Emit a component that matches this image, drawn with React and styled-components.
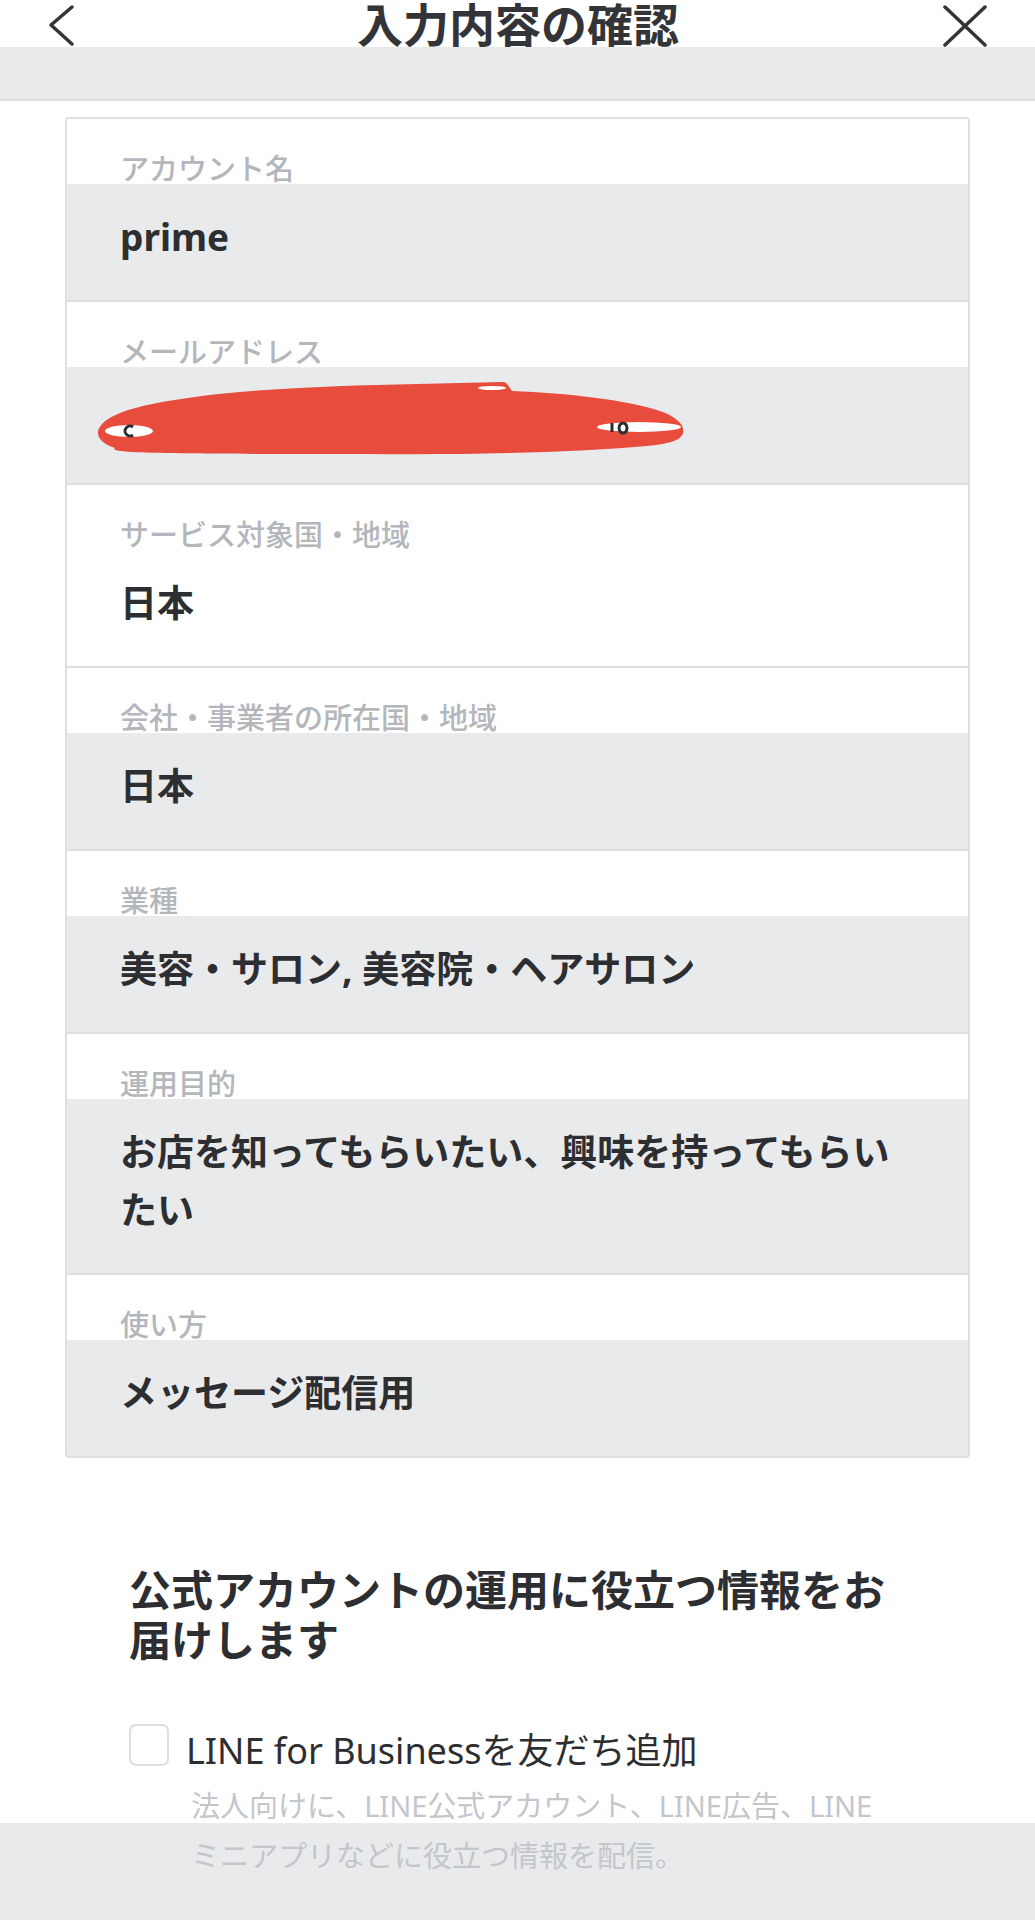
import styled, { createGlobalStyle } from "styled-components";

const GlobalStyle = createGlobalStyle`
  body {
    margin: 0;
    background: #ffffff;
    font-family: "Noto Sans", "Noto Sans CJK JP", sans-serif;
    color: #2d2e31;
  }
`;

const Page = styled.div`
  display: flex;
  flex-direction: column;
  min-height: 1920px;
  width: 1035px;
`;

const Header = styled.header`
  display: grid;
  grid-template-columns: 1fr auto 1fr;
  align-items: center;
  height: 47px;
  padding: 0 47px 0 48px;

  & h1 {
    margin: 0;
    font-size: 46px;
    line-height: 46px;
    font-weight: 700;
    color: #333438;
  }
  .back {
    justify-self: start;
  }
  .close {
    justify-self: end;
  }
`;

const SubBar = styled.div`
  height: 52px;
  background: #e9eaec;
  border-bottom: 2px solid #dcdddf;
`;

const Card = styled.section`
  margin: 16px 65px 0;
  border: 2px solid #dedfe1;
  border-radius: 4px;
  overflow: hidden;
`;

const Row = styled.div`
  & + & {
    border-top: 2px solid #dedfe1;
  }
`;

const Label = styled.div`
  padding: 35px 53px 1px;
  font-size: 29px;
  line-height: 29px;
  font-weight: 500;
  color: #b3b6bb;
`;

const Value = styled.div`
  padding: 24px 53px 34px;
  min-height: 58px;
  font-size: 37px;
  line-height: 58px;
  font-weight: 700;
  color: #2d2e31;
  background: ${(p) => (p.$shaded ? "#e9eaec" : "transparent")};

  & svg {
    display: block;
    margin: -24px -53px -34px;
  }
`;

const Bottom = styled.section`
  flex: 1;
  padding: 107px 129px 0;
  background: linear-gradient(
    to bottom,
    #ffffff 0,
    #ffffff 365px,
    #e9eaec 365px
  );

  & h2 {
    margin: 0;
    font-size: 42px;
    line-height: 50px;
    font-weight: 700;
    color: #2d2e31;
  }
`;

const CheckRow = styled.label`
  display: flex;
  gap: 17px;
  margin-top: 58px;
  font-size: 36px;
  line-height: 56px;
  color: #2d2e31;
`;

const Box = styled.span`
  flex: none;
  width: 36px;
  height: 38px;
  margin-top: 1px;
  border: 2px solid #dcdde0;
  border-radius: 7px;
  background: #ffffff;
`;

const Note = styled.p`
  margin: 2px 24px 0 62px;
  font-size: 29px;
  line-height: 50px;
  color: #c3c6cb;
`;

const BackIcon = () => (
  <svg className="back" width="30" height="47" viewBox="0 0 30 47">
    <polyline
      points="24,7 3,25 24,44"
      fill="none"
      stroke="#333438"
      strokeWidth="3.5"
      strokeLinecap="round"
      strokeLinejoin="round"
    />
  </svg>
);

const CloseIcon = () => (
  <svg className="close" width="46" height="47" viewBox="0 0 46 47">
    <path
      d="M3 7 L43 45 M43 7 L3 45"
      fill="none"
      stroke="#333438"
      strokeWidth="3.5"
      strokeLinecap="round"
    />
  </svg>
);

const Scribble = () => (
  <svg width="900" height="116" viewBox="0 0 900 116">
    <path
      d="M31 64 C35 50 60 42 90 36 C160 22 263 19 350 17 L435 15 C440 14 442 20 445 24 C500 26 560 33 593 44 C610 50 618 58 616 66 C614 74 600 77 580 79 C500 86 395 88 300 87 C200 87 100 87 65 85 C50 84 45 83 48 81 C35 77 30 70 31 64 Z"
      fill="#e84c3d"
    />
    <ellipse cx="62" cy="64" rx="24" ry="6" fill="#ffffff" />
    <path d="M66 60 a5 5 0 1 0 0 8" fill="none" stroke="#2d2e31" strokeWidth="3" />
    <ellipse cx="572" cy="60" rx="42" ry="5" fill="#ffffff" />
    <path d="M545 56 v9 M556 56 a4 5 0 1 0 0.1 0" fill="none" stroke="#2d2e31" strokeWidth="3" />
    <ellipse cx="425" cy="21" rx="14" ry="2" fill="#ffffff" />
  </svg>
);

const fields = [
  { label: "アカウント名", value: "prime", shaded: true },
  { label: "メールアドレス", redacted: true, shaded: true },
  { label: "サービス対象国・地域", value: "日本", shaded: false },
  { label: "会社・事業者の所在国・地域", value: "日本", shaded: true },
  { label: "業種", value: "美容・サロン, 美容院・ヘアサロン", shaded: true },
  {
    label: "運用目的",
    value: "お店を知ってもらいたい、興味を持ってもらいたい",
    shaded: true,
  },
  { label: "使い方", value: "メッセージ配信用", shaded: true },
];

export default function App() {
  return (
    <>
      <GlobalStyle />
      <Page>
        <Header>
          <BackIcon />
          <h1>入力内容の確認</h1>
          <CloseIcon />
        </Header>
        <SubBar />
        <Card>
          {fields.map((f) => (
            <Row key={f.label}>
              <Label>{f.label}</Label>
              <Value $shaded={f.shaded}>
                {f.redacted ? <Scribble /> : f.value}
              </Value>
            </Row>
          ))}
        </Card>
        <Bottom>
          <h2>公式アカウントの運用に役立つ情報をお届けします</h2>
          <CheckRow>
            <Box />
            <span>LINE for Businessを友だち追加</span>
          </CheckRow>
          <Note>
            法人向けに、LINE公式アカウント、LINE広告、LINEミニアプリなどに役立つ情報を配信。
          </Note>
        </Bottom>
      </Page>
    </>
  );
}
